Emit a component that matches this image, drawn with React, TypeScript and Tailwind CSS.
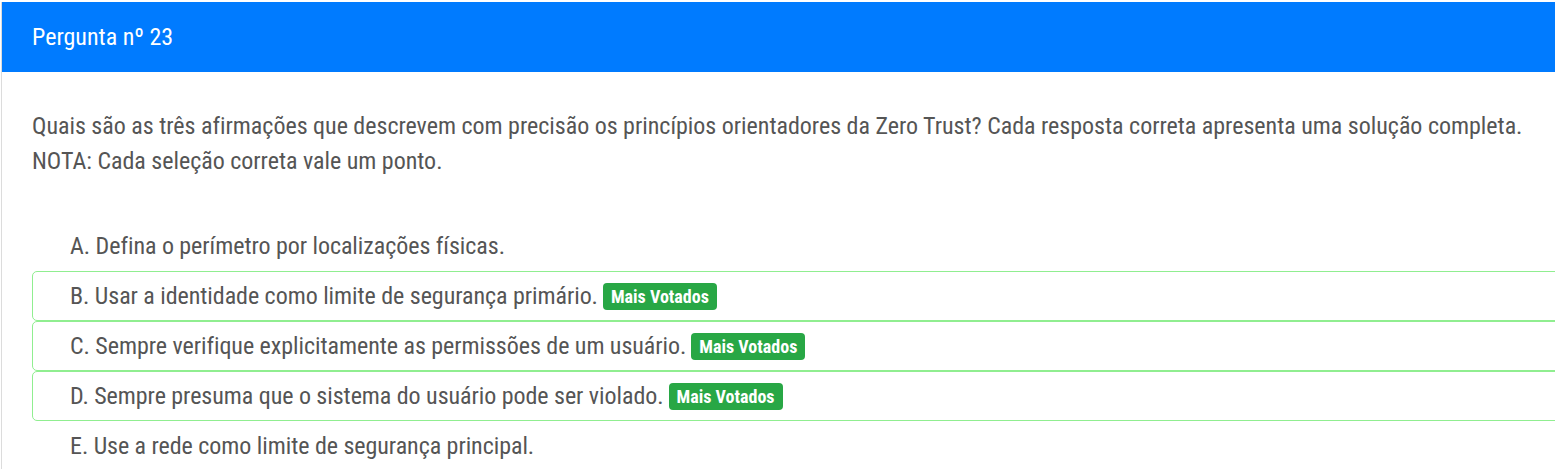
import type { FC } from "react";

interface Choice {
  letter: string;
  text: string;
  voted?: boolean;
}

const choices: Choice[] = [
  { letter: "A", text: "Defina o perímetro por localizações físicas." },
  { letter: "B", text: "Usar a identidade como limite de segurança primário.", voted: true },
  { letter: "C", text: "Sempre verifique explicitamente as permissões de um usuário.", voted: true },
  { letter: "D", text: "Sempre presuma que o sistema do usuário pode ser violado.", voted: true },
  { letter: "E", text: "Use a rede como limite de segurança principal." },
];

const ChoiceRow: FC<Choice> = ({ letter, text, voted }) => (
  <li
    className={
      voted
        ? "flex h-[50px] items-center rounded-[5px] border border-[#90ee90] pl-[37px]"
        : "flex h-[50px] items-center rounded-[5px] border border-transparent pl-[37px]"
    }
  >
    <span className="tracking-[-0.05px]">
      {letter}. {text}
    </span>
    {voted ? (
      <span className="ml-[5px] rounded-[4px] bg-[#28a745] px-[8px] py-[3px] text-[18px] font-bold leading-[21px] text-white">
        Mais Votados
      </span>
    ) : null}
  </li>
);

export default function App() {
  return (
    <div className="h-[469px] w-[1555px] overflow-hidden bg-white font-['Roboto',sans-serif] font-stretch-condensed">
      <div className="ml-[1px] mt-[2px] border-l border-[#dcdcdc]">
        <div className="flex h-[70px] items-center bg-[#007bff] pl-[30px] text-[24px] text-white">
          Pergunta nº 23
        </div>
        <div className="pl-[30px] pt-[37px] text-[24px] text-[#555555]">
          <p className="leading-[35px] tracking-[-0.02px]">
            Quais são as três afirmações que descrevem com precisão os princípios orientadores da Zero Trust? Cada
            resposta correta apresenta uma solução completa.
            <br />
            NOTA: Cada seleção correta vale um ponto.
          </p>
          <ul className="mr-[-20px] mt-[42px]">
            {choices.map((c) => (
              <ChoiceRow key={c.letter} {...c} />
            ))}
          </ul>
        </div>
      </div>
    </div>
  );
}
